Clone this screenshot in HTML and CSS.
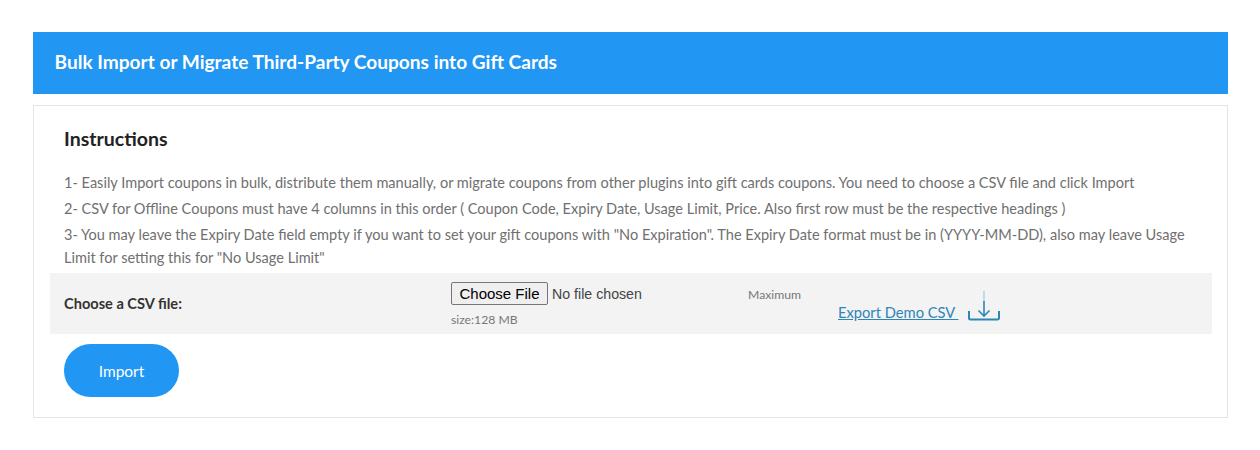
FILE: index.html
```html
<!DOCTYPE html>
<html lang="en">
<head>
  <meta charset="UTF-8">
  <title>Bulk Import</title>
  <link rel="stylesheet" href="styles.css">
</head>
<body>
  <div class="page">
    <h2 class="page-title">Bulk Import or Migrate Third-Party Coupons into Gift Cards</h2>

    <div class="panel">
      <h3 class="panel-heading">Instructions</h3>
      <div class="steps">
        <p>1- Easily Import coupons in bulk, distribute them manually, or migrate coupons from other plugins into gift cards coupons. You need to choose a CSV file and click Import</p>
        <p>2- CSV for Offline Coupons must have 4 columns in this order ( Coupon Code, Expiry Date, Usage Limit, Price. Also first row must be the respective headings )</p>
        <p>3- You may leave the Expiry Date field empty if you want to set your gift coupons with "No Expiration". The Expiry Date format must be in (YYYY-MM-DD), also may leave Usage Limit for setting this for "No Usage Limit"</p>
      </div>

      <div class="file-row">
        <label class="file-label" for="csvFile">Choose a CSV file:</label>
        <div class="file-field">
          <input class="file-input" id="csvFile" type="file">
          <div class="file-limit">
            <span class="limit-word">Maximum</span>
            <span class="limit-size">size:128 MB</span>
          </div>
        </div>
        <div class="export">
          <a class="export-link" href="#">Export Demo CSV&nbsp;</a>
          <svg class="export-icon" width="32" height="30" viewBox="0 0 32 30" fill="none" stroke="#2d86b5" stroke-width="1.6">
            <path d="M16 0v10" stroke="#b5d3e3"/>
            <path d="M16 10v15M10.500 19.500l5.500 5.500 5.500-5.500"/>
            <path d="M1 20v7a1.500 1.500 0 0 0 1.500 1.500h27a1.500 1.500 0 0 0 1.500-1.500v-7" stroke-width="2"/>
          </svg>
        </div>
      </div>

      <button class="import-btn" type="button">Import</button>
    </div>
  </div>
</body>
</html>
```

FILE: styles.css
```css
/* Base styling */
body {
  margin: 0;
  font-family: Lato, "Open Sans", sans-serif;
  background-color: #fff;
}

.page {
  padding: 32px 32px 0 33px;
}

.page-title {
  margin: 0 0 11px;
  padding: 0 22px 0 21.500px;
  height: 62px;
  line-height: 60px;
  font-size: 19.100px;
  font-weight: 700;
  color: #fff;
  background-color: #2196f3;
}

/* Instructions panel */
.panel {
  height: 311px;
  padding: 0 15px 0 16px;
  border: 1px solid #e4e4e4;
}

.panel-heading {
  margin: 0;
  padding: 20px 14px 0;
  font-size: 19.500px;
  line-height: 26px;
  font-weight: 700;
  color: #222;
}

.steps {
  padding: 19px 14px 0;
  font-size: 14.550px;
  line-height: 23px;
  color: #707070;
}

.steps p {
  margin: 0 0 3px;
}

/* File row */
.file-row {
  display: grid;
  grid-template-columns: 387px 387px 1fr;
  height: 61px;
  margin-top: 4px;
  padding-left: 14px;
  background-color: #f3f3f3;
}

.file-label {
  align-self: center;
  font-size: 14.600px;
  font-weight: 700;
  color: #333;
}

.file-field {
  position: relative;
  padding-top: 9px;
}

.file-input {
  display: block;
  font-family: "Liberation Sans", Arial, sans-serif;
  font-size: 14.200px;
  color: #444;
}

.file-input::file-selector-button {
  width: 97px;
  height: 23px;
  padding: 0;
  font-size: 15px;
  margin-right: 4px;
  border: 1px solid #767676;
  border-radius: 2px;
  background-color: #efefef;
}

.file-limit {
  font-size: 12.200px;
  color: #777;
}

.limit-size {
  display: block;
  margin-top: 7px;
}

.limit-word {
  position: absolute;
  top: 14px;
  left: 297px;
}

.export {
  display: flex;
  align-items: flex-start;
  gap: 10px;
  padding-top: 18px;
}

.export-link {
  margin-top: 12px;
  line-height: 18px;
  font-size: 14.700px;
  color: #2d86b5;
}

.export-icon {
  flex: none;
}

/* Import button */
.import-btn {
  display: block;
  width: 115px;
  height: 53px;
  margin: 10px 0 0 14px;
  border: none;
  border-radius: 27px;
  font-family: inherit;
  font-size: 15.500px;
  color: #fff;
  background-color: #2196f3;
}
```
